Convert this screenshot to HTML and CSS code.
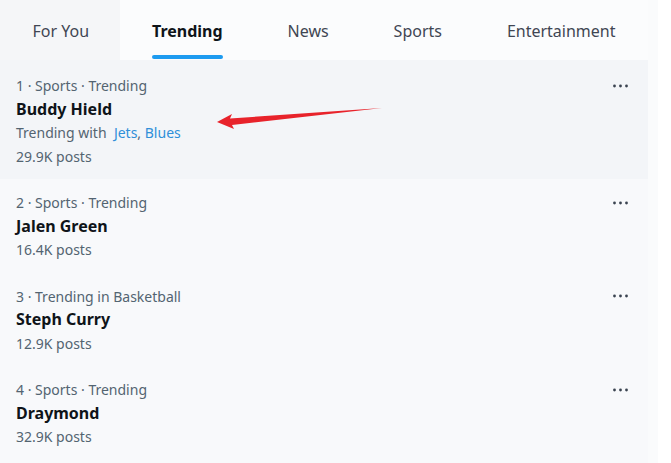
FILE: index.html
```html
<!DOCTYPE html>
<html lang="en">
<head>
<meta charset="UTF-8">
<meta name="viewport" content="width=device-width, initial-scale=1.0">
<title>Explore - Trending</title>
    <link rel="stylesheet" href="styles.css">
</head>
<body>
    <div class="page">
        <div class="column">
            <!-- tabs -->
            <nav class="tabs">
                <a class="tab tab-first">For You</a>
                <a class="tab active"><span class="tab-label">Trending</span></a>
                <a class="tab">News</a>
                <a class="tab">Sports</a>
                <a class="tab">Entertainment</a>
            </nav>

            <!-- trends -->
            <div class="trend hover">
                <div class="trend-body">
                    <div class="meta">1 · Sports · Trending</div>
                    <div class="name">Buddy Hield</div>
                    <div class="meta">Trending with&nbsp; <span class="link">Jets</span>, <span class="link">Blues</span></div>
                    <div class="meta">29.9K posts</div>
                </div>
                <button class="more" aria-label="More">
                    <svg viewBox="0 0 19 6" width="19" height="6"><circle cx="3.5" cy="3" r="1.4"/><circle cx="9.5" cy="3" r="1.4"/><circle cx="15.5" cy="3" r="1.4"/></svg>
                </button>
            </div>

            <div class="trend">
                <div class="trend-body">
                    <div class="meta">2 · Sports · Trending</div>
                    <div class="name">Jalen Green</div>
                    <div class="meta">16.4K posts</div>
                </div>
                <button class="more" aria-label="More">
                    <svg viewBox="0 0 19 6" width="19" height="6"><circle cx="3.5" cy="3" r="1.4"/><circle cx="9.5" cy="3" r="1.4"/><circle cx="15.5" cy="3" r="1.4"/></svg>
                </button>
            </div>

            <div class="trend">
                <div class="trend-body">
                    <div class="meta">3 · Trending in Basketball</div>
                    <div class="name">Steph Curry</div>
                    <div class="meta">12.9K posts</div>
                </div>
                <button class="more" aria-label="More">
                    <svg viewBox="0 0 19 6" width="19" height="6"><circle cx="3.5" cy="3" r="1.4"/><circle cx="9.5" cy="3" r="1.4"/><circle cx="15.5" cy="3" r="1.4"/></svg>
                </button>
            </div>

            <div class="trend">
                <div class="trend-body">
                    <div class="meta">4 · Sports · Trending</div>
                    <div class="name">Draymond</div>
                    <div class="meta">32.9K posts</div>
                </div>
                <button class="more" aria-label="More">
                    <svg viewBox="0 0 19 6" width="19" height="6"><circle cx="3.5" cy="3" r="1.4"/><circle cx="9.5" cy="3" r="1.4"/><circle cx="15.5" cy="3" r="1.4"/></svg>
                </button>
            </div>

            <!-- red annotation arrow drawn over the first trend -->
            <svg class="arrow" viewBox="0 0 170 24" width="170" height="24">
                <polygon points="2,16 17,8 15,12.5 167,2 17,19 19,23" fill="#e8232b"/>
            </svg>
        </div>
    </div>
</body>
</html>
```

FILE: styles.css
```css
*{
    box-sizing: border-box;
}
body{
    margin: 0;
    background-color: #ffffff;
    font-family: "Noto Sans", "Open Sans", sans-serif;
}
.page{
    width: 671px;
    height: 463px;
    overflow: hidden;
}
.column{
    position: relative;
    width: 658px;
    height: 463px;
    background-color: #f8f9fb;
    border-right: 10px solid #fafbfc;
}
.tabs{
    display: flex;
    height: 60px;
    background-color: #fbfcfd;
}
.tab{
    flex: 1 1 auto;
    display: flex;
    align-items: center;
    justify-content: center;
    padding: 2px 15px 0;
    font-size: 16px;
    color: #3f4653;
}
.tab-first{
    background-color: #f5f6f8;
    padding-right: 13px;
}
.active{
    color: #0f1419;
    font-weight: 700;
}
.tab-label{
    position: relative;
    display: inline-block;
}
.tab-label::after{
    content: "";
    position: absolute;
    left: 0;
    right: 0;
    top: 35px;
    height: 4px;
    border-radius: 2px;
    background-color: #1d9bf0;
}
.trend{
    display: flex;
    justify-content: space-between;
    padding: 14px 16px 11px;
}
.trend + .trend{
    padding-top: 12px;
}
.hover{
    background-color: #f3f5f8;
}
.meta{
    font-size: 14px;
    line-height: 23.5px;
    color: #536471;
}
.name{
    font-size: 16px;
    line-height: 23.5px;
    font-weight: 700;
    color: #0f1419;
}
.link{
    color: #2f8fd8;
}
.more{
    width: 24px;
    height: 23.5px;
    padding: 0;
    margin-right: 0;
    border: 0;
    background: none;
    display: flex;
    align-items: center;
    justify-content: center;
    fill: #3a4350;
}
.arrow{
    position: absolute;
    left: 215px;
    top: 106px;
}
```
